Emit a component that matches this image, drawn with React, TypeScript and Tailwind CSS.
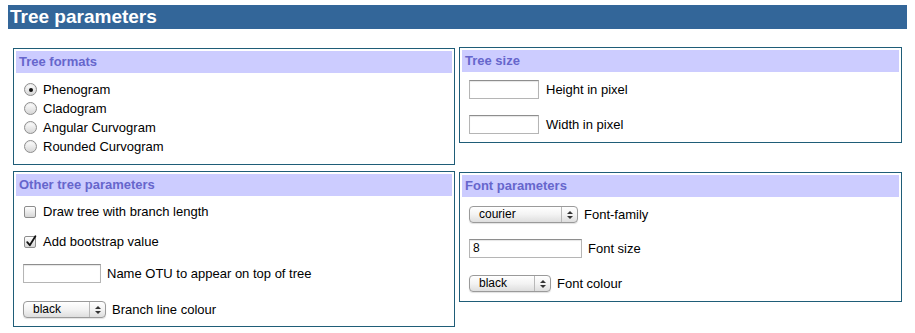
import type { ReactNode } from "react";

function Box({ title, className, children }: { title: string; className?: string; children: ReactNode }) {
  return (
    <div className={`self-start border border-[#1f5d78] px-[2px] pt-[2px] ${className ?? ""}`}>
      <div className="h-[22px] bg-[#ccccff] pl-[3px] text-[13px] font-bold leading-[22px] text-[#6666cc]">
        {title}
      </div>
      {children}
    </div>
  );
}

function Radio({ checked, label }: { checked?: boolean; label: string }) {
  return (
    <div className="flex h-[19px] items-center">
      <span className="ml-[8px] flex h-[13px] w-[13px] items-center justify-center rounded-full border border-[#8d8d8d] bg-gradient-to-b from-[#ffffff] to-[#d6d6d6] shadow-[inset_0_1px_1px_rgba(0,0,0,0.08)]">
        {checked && <span className="h-[4px] w-[4px] rounded-full bg-[#111]" />}
      </span>
      <span className="ml-[6px]">{label}</span>
    </div>
  );
}

function Checkbox({ checked, label }: { checked?: boolean; label: string }) {
  return (
    <div className="flex h-[19px] items-center">
      <span className="relative ml-[8px] h-[12px] w-[12px] rounded-[2px] border border-[#8d8d8d] bg-gradient-to-b from-[#ffffff] to-[#d6d6d6]">
        {checked && (
          <svg className="absolute left-[0px] top-[-3px]" width="13" height="14" viewBox="0 0 13 14">
            <path d="M2.2 8.2 L4.8 11.2 L10.4 2.2" fill="none" stroke="#111" strokeWidth="1.8" strokeLinecap="round" strokeLinejoin="round" />
          </svg>
        )}
      </span>
      <span className="ml-[7px]">{label}</span>
    </div>
  );
}

function TextInput({ value, className }: { value?: string; className: string }) {
  return (
    <div
      className={`box-border h-[19px] border border-[#b5b5b5] border-t-[#8e8e8e] bg-white pl-[3px] text-[12px] leading-[17px] shadow-[inset_0_1px_1px_rgba(0,0,0,0.1)] ${className}`}
    >
      {value}
    </div>
  );
}

function Select({ value, className }: { value: string; className: string }) {
  return (
    <div
      className={`flex h-[17px] items-stretch rounded-[4px] border border-[#9a9a9a] bg-gradient-to-b from-[#ffffff] via-[#f3f3f3] to-[#dedede] text-[12px] shadow-[0_1px_1px_rgba(0,0,0,0.12)] ${className}`}
    >
      <span className="flex-1 pl-[9px] leading-[15px]">{value}</span>
      <span className="flex w-[16px] flex-col items-center justify-center gap-[2px] border-l border-[#b8b8b8]">
        <svg width="6" height="3" viewBox="0 0 6 3">
          <path d="M0 3 L3 0 L6 3 Z" fill="#333" />
        </svg>
        <svg width="6" height="3" viewBox="0 0 6 3">
          <path d="M0 0 L3 3 L6 0 Z" fill="#333" />
        </svg>
      </span>
    </div>
  );
}

export default function App() {
  return (
    <div className="min-h-[333px] w-[915px] bg-white text-[13px] leading-[16px] text-black [font-family:'Liberation_Sans',Arial,sans-serif]">
      <div className="mx-[8px] mt-[5px] h-[24px] bg-[#336699] pl-[2px] text-[19px] font-bold leading-[24px] text-white">
        Tree parameters
      </div>

      <div className="grid grid-cols-[442px_443px] items-start gap-x-[4px] gap-y-[6px] pl-[13px] pt-[18px]">
        <Box title="Tree formats" className="mt-[1px] pb-[8px]">
          <div className="mt-[7px] flex flex-col">
            <Radio checked label="Phenogram" />
            <Radio label="Cladogram" />
            <Radio label="Angular Curvogram" />
            <Radio label="Rounded Curvogram" />
          </div>
        </Box>

        <Box title="Tree size" className="pb-[8px]">
          <div className="mt-[8px] flex flex-col gap-[16px] pl-[7px]">
            <div className="flex items-center gap-[7px]">
              <TextInput className="w-[70px]" />
              <span>Height in pixel</span>
            </div>
            <div className="flex items-center gap-[7px]">
              <TextInput className="w-[70px]" />
              <span>Width in pixel</span>
            </div>
          </div>
        </Box>

        <Box title="Other tree parameters" className="pb-[8px]">
          <div className="flex flex-col">
            <div className="mt-[6px]">
              <Checkbox label="Draw tree with branch length" />
            </div>
            <div className="mt-[11px]">
              <Checkbox checked label="Add bootstrap value" />
            </div>
            <div className="mt-[13px] flex items-center gap-[6px] pl-[7px]">
              <TextInput className="w-[78px]" />
              <span>Name OTU to appear on top of tree</span>
            </div>
            <div className="mt-[18px] flex items-center gap-[6px] pl-[7px]">
              <Select value="black" className="w-[83px]" />
              <span>Branch line colour</span>
            </div>
          </div>
        </Box>

        <Box title="Font parameters" className="mt-[1px] pb-[9px]">
          <div className="mt-[9px] flex flex-col pl-[7px]">
            <div className="flex items-center gap-[6px]">
              <Select value="courier" className="w-[109px]" />
              <span>Font-family</span>
            </div>
            <div className="mt-[16px] flex items-center gap-[6px]">
              <TextInput value="8" className="w-[113px]" />
              <span>Font size</span>
            </div>
            <div className="mt-[17px] flex items-center gap-[6px]">
              <Select value="black" className="w-[82px]" />
              <span>Font colour</span>
            </div>
          </div>
        </Box>
      </div>
    </div>
  );
}
